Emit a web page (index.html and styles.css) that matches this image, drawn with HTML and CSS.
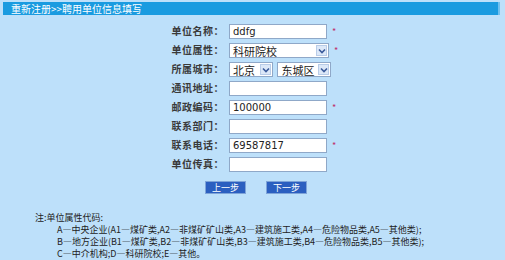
FILE: index.html
```html
<!DOCTYPE html>
<html lang="zh-CN">
<head>
  <meta charset="UTF-8">
  <title>聘用单位信息填写</title>
  <link rel="stylesheet" href="styles.css">
</head>
<body>
  <div class="title-bar">重新注册&gt;&gt;聘用单位信息填写</div>

  <table class="form">
    <tr>
      <td class="label">单位名称：</td>
      <td><input class="text" type="text" value="ddfg"><span class="req">*</span></td>
    </tr>
    <tr>
      <td class="label">单位属性：</td>
      <td>
        <span class="select wide">科研院校<span class="arrow"><svg width="8" height="6" viewBox="0 0 8 6"><path d="M1 1.5 L4 4.5 L7 1.5" fill="none" stroke="#3a5a9a" stroke-width="1.6"/></svg></span></span><span class="req">*</span>
      </td>
    </tr>
    <tr>
      <td class="label">所属城市：</td>
      <td>
        <span class="select city">北京<span class="arrow"><svg width="8" height="6" viewBox="0 0 8 6"><path d="M1 1.5 L4 4.5 L7 1.5" fill="none" stroke="#3a5a9a" stroke-width="1.6"/></svg></span></span>
        <span class="select district">东城区<span class="arrow"><svg width="8" height="6" viewBox="0 0 8 6"><path d="M1 1.5 L4 4.5 L7 1.5" fill="none" stroke="#3a5a9a" stroke-width="1.6"/></svg></span></span>
      </td>
    </tr>
    <tr>
      <td class="label">通讯地址：</td>
      <td><input class="text" type="text" value=""></td>
    </tr>
    <tr>
      <td class="label">邮政编码：</td>
      <td><input class="text" type="text" value="100000"><span class="req">*</span></td>
    </tr>
    <tr>
      <td class="label">联系部门：</td>
      <td><input class="text" type="text" value=""></td>
    </tr>
    <tr>
      <td class="label">联系电话：</td>
      <td><input class="text" type="text" value="69587817"><span class="req">*</span></td>
    </tr>
    <tr>
      <td class="label">单位传真：</td>
      <td><input class="text" type="text" value=""></td>
    </tr>
  </table>

  <div class="buttons">
    <button class="btn">上一步</button>
    <button class="btn">下一步</button>
  </div>

  <div class="note">
    <div>注:单位属性代码:</div>
    <div class="indent">A—中央企业(A1—煤矿类,A2—非煤矿矿山类,A3—建筑施工类,A4—危险物品类,A5—其他类);</div>
    <div class="indent">B—地方企业(B1—煤矿类,B2—非煤矿矿山类,B3—建筑施工类,B4—危险物品类,B5—其他类);</div>
    <div class="indent">C—中介机构;D—科研院校;E—其他。</div>
  </div>
</body>
</html>
```

FILE: styles.css
```css
body {
  margin: 0;
  padding: 2px 3px;
  background-color: #bde0fa;
  font-family: "Noto Sans CJK SC", "DejaVu Sans", sans-serif;
  font-size: 11px;
  color: #1a1a1a;
}

.title-bar {
  height: 13px;
  line-height: 13px;
  width: 487px;
  padding-left: 8px;
  background-color: #1a9be0;
  border-right: 2px solid #6fc0ef;
  color: #ffffff;
  font-size: 10px;
}

.form {
  border-collapse: collapse;
  margin-top: 6px;
}

.form td {
  height: 19px;
  padding: 0;
}

.form .label {
  width: 221px;
  text-align: right;
  padding-right: 5px;
  font-size: 10px;
  font-weight: bold;
  letter-spacing: 0.5px;
  color: #3a3a3a;
}

.text {
  box-sizing: border-box;
  width: 98px;
  height: 15px;
  border: 1px solid #8fa8c8;
  background: #fff;
  padding: 0 3px;
  font-family: "DejaVu Sans", sans-serif;
  font-size: 10px;
  color: #222;
  vertical-align: middle;
}

.req {
  color: #c0306a;
  font-size: 9px;
  margin-left: 5px;
  vertical-align: middle;
}

.select {
  box-sizing: border-box;
  display: inline-flex;
  align-items: center;
  justify-content: space-between;
  height: 15px;
  padding-left: 3px;
  background: #fff;
  border: 1px solid #8fa8c8;
  font-size: 11px;
  color: #222;
  vertical-align: middle;
}

.select.wide {
  width: 100px;
}

.select.city {
  width: 44px;
}

.select.district {
  width: 54px;
  margin-left: 2px;
}

.arrow {
  display: flex;
  align-items: center;
  justify-content: center;
  width: 11px;
  height: 11px;
  margin-right: 1px;
  background: #dce8f8;
  border: 1px solid #b8cce8;
  box-sizing: border-box;
}

.buttons {
  display: flex;
  gap: 20px;
  margin-left: 202px;
  margin-top: 8px;
}

.btn {
  width: 41px;
  height: 13px;
  padding: 0;
  background-color: #2b5fc0;
  border: 1px solid #7fa4d8;
  color: #fff;
  font-family: "Noto Sans CJK SC", sans-serif;
  font-size: 9px;
  line-height: 11px;
}

.note {
  margin-top: 18px;
  margin-left: 32px;
  font-size: 9px;
  line-height: 12px;
  color: #222;
}

.note .indent {
  padding-left: 22px;
}
```
